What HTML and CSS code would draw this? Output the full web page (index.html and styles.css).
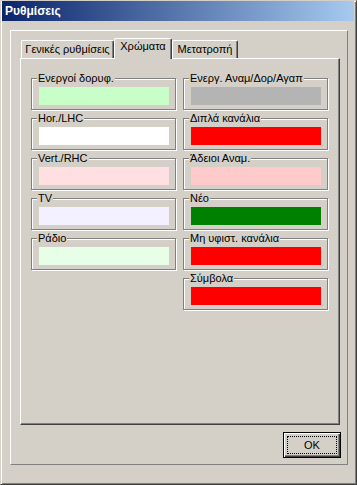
FILE: index.html
```html
<!DOCTYPE html>
<html lang="el">
<head>
<meta charset="utf-8">
<title>Ρυθμίσεις</title>
<link rel="stylesheet" href="styles.css">
</head>
<body>
<div class="window">
  <div class="titlebar"><span class="title">Ρυθμίσεις</span></div>
  <div class="panel">
    <div class="tabs">
      <div class="tab tab-general">Γενικές ρυθμίσεις</div>
      <div class="tab tab-colors selected">Χρώματα</div>
      <div class="tab tab-convert">Μετατροπή</div>
    </div>
    <div class="tabbody">
      <div class="col">
        <div class="group"><span class="label">Ενεργοί δορυφ.</span><div class="swatch c-active"></div></div>
        <div class="group"><span class="label">Hor./LHC</span><div class="swatch c-hor"></div></div>
        <div class="group"><span class="label">Vert./RHC</span><div class="swatch c-vert"></div></div>
        <div class="group"><span class="label">TV</span><div class="swatch c-tv"></div></div>
        <div class="group"><span class="label">Ράδιο</span><div class="swatch c-radio"></div></div>
      </div>
      <div class="col">
        <div class="group"><span class="label">Ενεργ. Αναμ/Δορ/Αγαπ</span><div class="swatch c-gray"></div></div>
        <div class="group"><span class="label">Διπλά κανάλια</span><div class="swatch c-red"></div></div>
        <div class="group"><span class="label">Άδειοι Αναμ.</span><div class="swatch c-pink"></div></div>
        <div class="group"><span class="label">Νέο</span><div class="swatch c-green"></div></div>
        <div class="group"><span class="label">Μη υφιστ. κανάλια</span><div class="swatch c-red"></div></div>
        <div class="group"><span class="label">Σύμβολα</span><div class="swatch c-red"></div></div>
      </div>
    </div>
    <button class="ok" type="button">OK</button>
  </div>
</div>
</body>
</html>
```

FILE: styles.css
```css
html, body {
  margin: 0;
  padding: 0;
  background: #d4d0c8;
}

body {
  font-family: "Liberation Sans", Arial, sans-serif;
  font-size: 11px;
  line-height: 13px;
  color: #000;
}

.window {
  width: 357px;
  height: 485px;
  box-sizing: border-box;
  background: #d4d0c8;
  border: 1px solid;
  border-color: #d4d0c8 #404040 #404040 #d4d0c8;
  box-shadow: inset 1px 1px 0 #fff, inset -1px -1px 0 #808080;
  padding: 0 2px 2px 1px;
  display: flex;
  flex-direction: column;
}

.titlebar {
  height: 20px;
  background: linear-gradient(to right, #0a246a, #a6caf0);
  display: flex;
  align-items: center;
  padding-left: 3px;
}

.title {
  color: #fff;
  font-weight: bold;
  font-size: 12px;
  line-height: 14px;
}

.panel {
  margin: 9px 0 0 8px;
  width: 338px;
  height: 435px;
  box-sizing: border-box;
  border: 1px solid;
  border-color: #fff #808080 #808080 #fff;
  display: flex;
  flex-direction: column;
}

.tabs {
  margin: 7px 0 0 10px;
  height: 20px;
  display: flex;
  align-items: flex-end;
}

.tab {
  box-sizing: border-box;
  height: 18px;
  padding-top: 2px;
  text-align: center;
  background: #d4d0c8;
  border-top: 1px solid #fff;
  border-left: 1px solid #fff;
  border-right: 1px solid #404040;
  box-shadow: inset -1px 0 0 #808080;
  border-radius: 2px 2px 0 0;
  white-space: nowrap;
}

.tab-general { width: 93px; }
.tab-colors { width: 58px; }
.tab-convert { width: 66px; }

.tab.selected {
  height: 21px;
  margin-bottom: -1px;
  position: relative;
  z-index: 1;
  padding-top: 1px;
}

.tabbody {
  margin-left: 9px;
  width: 320px;
  height: 367px;
  box-sizing: border-box;
  border: 1px solid;
  border-color: #fff #404040 #404040 #fff;
  box-shadow: inset -1px -1px 0 #808080;
  padding: 19px 0 0 10px;
  display: flex;
  gap: 7px;
  align-items: flex-start;
}

.col {
  display: flex;
  flex-direction: column;
  gap: 8px;
}

.group {
  position: relative;
  width: 145px;
  box-sizing: border-box;
  border: 1px solid #808080;
  box-shadow: inset 1px 1px 0 #fff, 1px 1px 0 #fff;
  padding: 8px 6px 4px 7px;
}

.label {
  position: absolute;
  top: -7px;
  left: 5px;
  padding: 0 1px;
  background: #d4d0c8;
  white-space: nowrap;
}

.swatch {
  height: 18px;
}

.c-active { background: #c8ffc8; }
.c-hor { background: #ffffff; }
.c-vert { background: #ffdfe2; }
.c-tv { background: #f3f0ff; }
.c-radio { background: #e6ffe6; }
.c-gray { background: #b4b4b4; }
.c-red { background: #ff0000; }
.c-pink { background: #ffcaca; }
.c-green { background: #008000; }

.ok {
  align-self: flex-end;
  margin: 7px 6px 0 0;
  width: 58px;
  height: 26px;
  box-sizing: border-box;
  background: #d4d0c8;
  border: 1px solid #000;
  box-shadow: inset 1px 1px 0 #fff, inset -1px -1px 0 #404040, inset -2px -2px 0 #808080;
  outline: 1px dotted #000;
  outline-offset: -5px;
  font-family: "Liberation Sans", Arial, sans-serif;
  font-size: 11px;
  color: #000;
  padding: 0;
}
```
